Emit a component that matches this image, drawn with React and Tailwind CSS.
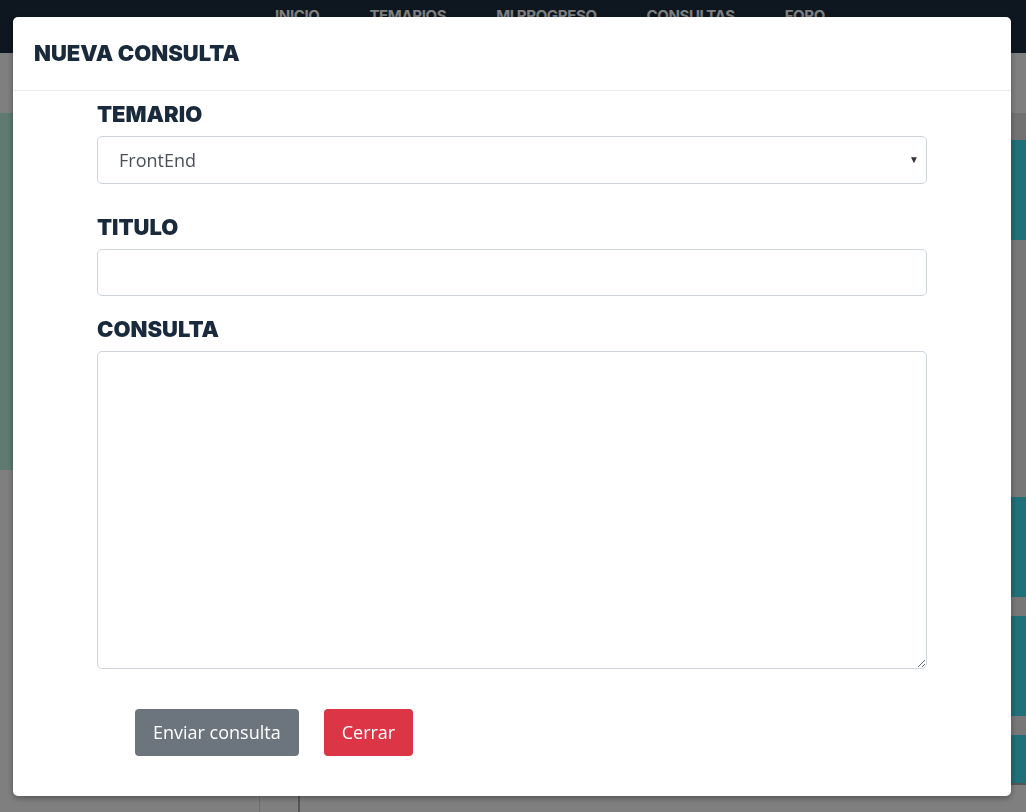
import React, { useState } from "react";

const heading = { fontFamily: "Inter, 'Liberation Sans', sans-serif" };
const body = { fontFamily: "'Open Sans', 'Liberation Sans', sans-serif" };

function Page() {
  const links = ["INICIO", "TEMARIOS", "MI PROGRESO", "CONSULTAS", "FORO"];
  return (
    <div className="min-h-[812px] bg-white">
      {/* Top nav */}
      <nav className="h-[53px] bg-[#1c2e40] flex items-start pl-[275px] gap-[50px] pt-[5px]" style={heading}>
        {links.map((l) => (
          <span key={l} className="text-white text-[15px] font-bold tracking-tight">
            {l}
          </span>
        ))}
      </nav>

      <div className="h-[60px]" />

      <div className="flex items-start">
        {/* left panel */}
        <div className="w-[300px] flex flex-col">
          <div className="h-[357px] bg-[#bef4e0]" />
          <div className="h-[326px]" />
          <div className="h-[16px] flex">
            <div className="w-[261px]" />
            <div className="w-[39px] border-l border-[#ddd]" />
            <div className="flex-1 border-l-2 border-[#aaa]" />
          </div>
        </div>

        <div className="flex-1" />

        {/* right column of cards */}
        <div className="w-[120px] flex flex-col bg-[#eeeeee] border-b-2 border-[#aaa]">
          <div className="h-[27px] bg-[#e5e5e5]" />
          <div className="h-[100px] bg-[#3ee0f0] flex items-center pl-[4px] text-[#333] text-[14px]">
            25
          </div>
          <div className="h-[257px]" />
          <div className="h-[100px] bg-[#3ee0f0] flex items-center pl-[4px] text-[#333] text-[14px]">
            25
          </div>
          <div className="h-[19px]" />
          <div className="h-[100px] bg-[#3ee0f0] flex items-center pl-[4px] text-[#333] text-[14px]">
            25
          </div>
          <div className="h-[19px]" />
          <div className="h-[48px] bg-[#3ee0f0]" />
        </div>
      </div>
    </div>
  );
}

function NuevaConsulta({ onClose }) {
  const [temario, setTemario] = useState("FrontEnd");
  const [titulo, setTitulo] = useState("");
  const [consulta, setConsulta] = useState("");

  const labelCls = "block text-[22px] leading-[24px] font-black text-[#192a3d] mb-[10px]";

  return (
    <div className="fixed inset-0 bg-black/50 pl-[13px] pt-[17px]">
      <div className="w-[998px] bg-white rounded-[5px] shadow-[0_2px_6px_rgba(0,0,0,0.35)]">
        {/* Header */}
        <div className="h-[74px] flex items-center px-[21px] border-b border-[#e9ecef]">
          <h2 className="text-[22px] font-black text-[#192a3d]" style={heading}>
            NUEVA CONSULTA
          </h2>
        </div>

        {/* Body */}
        <form className="px-[84px] pt-[11px] pb-[40px]" onSubmit={(e) => e.preventDefault()}>
          <label className={labelCls} style={heading}>TEMARIO</label>
          <div className="relative">
            <select
              value={temario}
              onChange={(e) => setTemario(e.target.value)}
              className="w-full h-[48px] appearance-none border border-[#ced4da] rounded-[5px] pl-[21px] text-[18px] text-[#495057] bg-white focus:outline-none"
              style={body}
            >
              <option>FrontEnd</option>
              <option>BackEnd</option>
            </select>
            <span className="absolute right-[8px] top-[18px] text-[10px] leading-none text-[#333] pointer-events-none">
              ▼
            </span>
          </div>

          <label className={`${labelCls} mt-[31px]`} style={heading}>TITULO</label>
          <input
            type="text"
            value={titulo}
            onChange={(e) => setTitulo(e.target.value)}
            className="w-full h-[47px] border border-[#ced4da] rounded-[5px] px-[21px] text-[18px] text-[#495057] focus:outline-none"
            style={body}
          />

          <label className={`${labelCls} mt-[21px]`} style={heading}>CONSULTA</label>
          <textarea
            value={consulta}
            onChange={(e) => setConsulta(e.target.value)}
            className="w-full h-[318px] block border border-[#ced4da] rounded-[5px] px-[21px] py-[10px] text-[18px] text-[#495057] focus:outline-none"
            style={body}
          />

          <div className="flex gap-[25px] pl-[38px] mt-[40px]">
            <button
              type="submit"
              className="h-[47px] px-[18px] rounded-[4px] bg-[#6c757d] text-white text-[18px]"
              style={body}
            >
              Enviar consulta
            </button>
            <button
              type="button"
              onClick={onClose}
              className="h-[47px] px-[18px] rounded-[4px] bg-[#dc3545] text-white text-[18px]"
              style={body}
            >
              Cerrar
            </button>
          </div>
        </form>
      </div>
    </div>
  );
}

export default function App() {
  const [open, setOpen] = useState(true);
  return (
    <div className="relative">
      <Page />
      {open && <NuevaConsulta onClose={() => setOpen(false)} />}
    </div>
  );
}
